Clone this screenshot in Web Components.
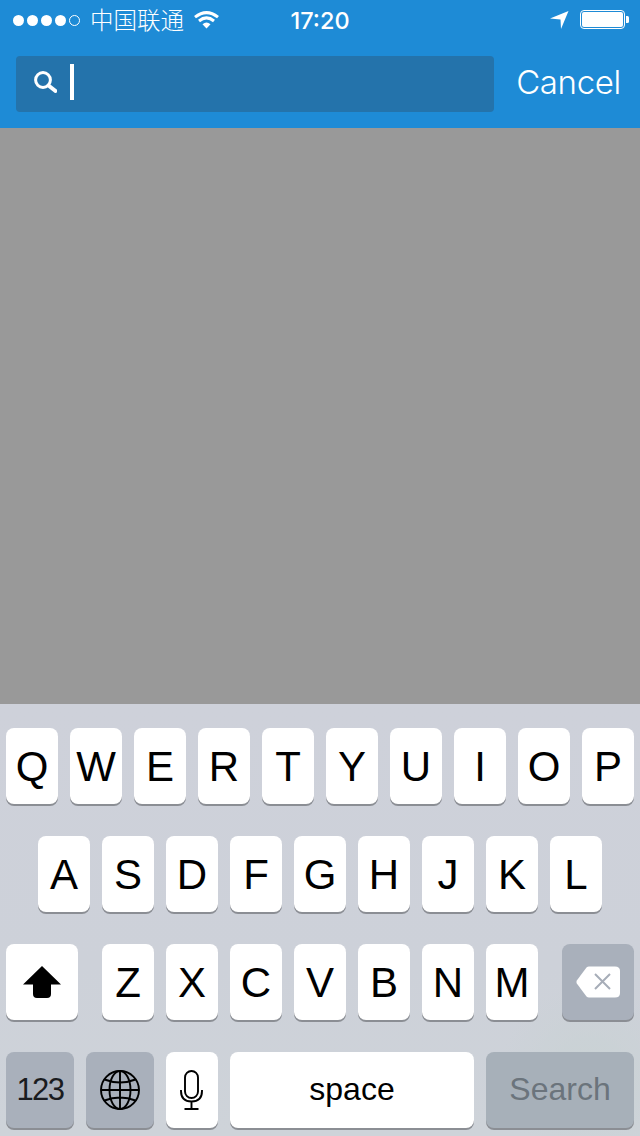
<!DOCTYPE html>
<html><head><meta charset="utf-8"><style>
html,body{margin:0;padding:0;height:100%}
body{width:640px;height:1136px;overflow:hidden;display:flex;flex-direction:column;font-family:"Liberation Sans",Arial,sans-serif;background:#999}
</style></head><body>
<search-header></search-header>
<dim-area></dim-area>
<ios-keyboard>
  <kb-row><kb-key>Q</kb-key><kb-key>W</kb-key><kb-key>E</kb-key><kb-key>R</kb-key><kb-key>T</kb-key><kb-key>Y</kb-key><kb-key>U</kb-key><kb-key>I</kb-key><kb-key>O</kb-key><kb-key>P</kb-key></kb-row>
  <kb-row><kb-key>A</kb-key><kb-key>S</kb-key><kb-key>D</kb-key><kb-key>F</kb-key><kb-key>G</kb-key><kb-key>H</kb-key><kb-key>J</kb-key><kb-key>K</kb-key><kb-key>L</kb-key></kb-row>
  <kb-row>
    <kb-key w="72" flat style="margin-right:12px"><svg width="38" height="34" viewBox="0 0 38 34"><path d="M19 1 L38 19.5 H28 V29 Q28 33 24 33 H14 Q10 33 10 29 V19.5 H0 Z" fill="#000"/></svg></kb-key>
    <kb-key>Z</kb-key><kb-key>X</kb-key><kb-key>C</kb-key><kb-key>V</kb-key><kb-key>B</kb-key><kb-key>N</kb-key><kb-key>M</kb-key>
    <kb-key w="72" flat tone="dark" style="margin-left:12px"><svg width="44" height="32" viewBox="0 0 44 32"><path d="M13 .5 H39 Q44 .5 44 5 V27 Q44 31.5 39 31.5 H13 Q11.5 31.5 10.5 30.5 L.8 17.5 Q0 16 .8 14.5 L10.5 1.5 Q11.5 .5 13 .5Z" fill="#fff"/><path d="M19 8 L34 23 M34 8 L19 23" stroke="#a7adb8" stroke-width="2" fill="none"/></svg></kb-key>
  </kb-row>
  <kb-row>
    <kb-key w="68" flat tone="dark" size="31" track="-1.5" style="color:#1a1c20">123</kb-key>
    <kb-key w="68" flat tone="dark"><svg width="40" height="40" viewBox="0 0 40 40" fill="none" stroke="#000" stroke-width="1.9"><circle cx="20" cy="20" r="19"/><ellipse cx="20" cy="20" rx="10.5" ry="19"/><path d="M20 1V39M1 20H39M4.5 9.5Q20 15.5 35.5 9.5M4.5 30.5Q20 24.5 35.5 30.5"/></svg></kb-key>
    <kb-key flat><svg width="23" height="40" viewBox="0 0 23 40" fill="none" stroke="#000" stroke-width="1.9" style="margin-right:1px"><rect x="5" y="1" width="13" height="27" rx="6.5"/><path d="M1 20V21Q1 31.5 11.5 31.5Q22 31.5 22 21V20M11.5 31.5V39M4.5 39H18.5"/></svg></kb-key>
    <kb-key w="244" flat size="32" lift="2">space</kb-key>
    <kb-key w="148" flat tone="search" size="32" lift="2">Search</kb-key>
  </kb-row>
</ios-keyboard>
<script>
function def(name,css,html,extra){
  customElements.define(name,class extends HTMLElement{
    constructor(){super();this.attachShadow({mode:'open'}).innerHTML='<style>'+css+'</style>'+html}
    connectedCallback(){if(extra)extra(this)}
  })
}
def('status-bar',`
:host{display:flex;align-items:center;height:40px;color:#fff;position:relative}
.dots{display:flex;gap:3px;margin-left:13px}
.dots i{width:11px;height:11px;border-radius:50%;background:#fff;box-sizing:border-box}
.dots i:last-child{background:none;border:1px solid #fff}
.carrier{margin-left:10px;font:300 23.5px/38px "Noto Sans CJK SC",sans-serif;white-space:nowrap;width:94px;height:40px}
.wifi{margin-left:10px}
.time{position:absolute;left:0;right:0;text-align:center;font:500 23.5px/41px Inter,"Liberation Sans",sans-serif;pointer-events:none}
.right{margin-left:auto;display:flex;align-items:center;margin-right:10px;gap:11px}
`,`
<div class="dots"><i></i><i></i><i></i><i></i><i></i></div>
<span class="carrier">中国联通</span>
<svg class="wifi" width="25" height="18" viewBox="0 0 25 18" fill="none" stroke="#fff" stroke-width="3"><path d="M1 6.2Q12.5 -3 24 6.2M5 10Q12.5 3.8 20 10"/><path d="M8.5 13.2 L12.5 17.6 L16.5 13.2 Q12.5 10 8.5 13.2Z" fill="#fff" stroke="none"/></svg>
<span class="time">17:20</span>
<div class="right">
<svg width="19" height="18" viewBox="0 0 19 18"><path d="M0 7.5 L18.5 0 L11 18 L10.5 8.5 Z" fill="#fff"/></svg>
<svg width="50" height="20" viewBox="0 0 50 20"><rect x=".5" y=".5" width="44" height="18" rx="3.5" fill="none" stroke="#fff"/><rect x="2" y="2" width="41" height="15" rx="2" fill="#fff"/><path d="M46 6h1.5q1.5 0 1.5 1.5v4q0 1.5-1.5 1.5H46z" fill="#fff"/></svg>
</div>`);
def('search-field',`
:host{display:flex;align-items:center;flex:1;height:56px;background:#2473ab;border-radius:4px;box-sizing:border-box;padding:0 0 4px 17px}
.cur{width:4px;height:36px;background:#fff;margin-left:13px}
`,`<svg width="24" height="24" viewBox="0 0 24 24" fill="none" stroke="#fff"><circle cx="10" cy="10" r="7.4" stroke-width="3"/><path d="M15.5 15.5L22.5 21" stroke-width="4" stroke-linecap="round"/></svg><div class="cur"></div>`);
def('search-header',`
:host{display:block;background:#1e8bd6;height:128px;flex:none}
.row{display:flex;align-items:center;height:56px;margin-top:16px;padding-left:16px}
.cancel{width:146px;box-sizing:border-box;padding:0 0 4px 3px;text-align:center;font:300 33px/52px Inter,"Liberation Sans",sans-serif;letter-spacing:-.35px;color:#fff}
`,`<status-bar></status-bar><div class="row"><search-field></search-field><span class="cancel">Cancel</span></div>`);
def('dim-area',`:host{display:block;flex:1;background:#999}`,``);
def('ios-keyboard',`
:host{display:flex;flex-direction:column;gap:32px;height:432px;box-sizing:border-box;padding:24px 6px 0;flex:none;
background:radial-gradient(circle at 590px 370px,#c9d2d4 0,rgba(205,210,216,0) 90px),linear-gradient(#ced1da,#cdd1d9 60%,#ced3d9)}
`,`<slot></slot>`);
def('kb-row',`:host{display:flex;justify-content:center;gap:12px;height:76px}`,`<slot></slot>`);
def('kb-key',`
:host{display:flex;align-items:center;justify-content:center;width:var(--w,52px);height:76px;box-sizing:border-box;padding-top:2px;padding-bottom:var(--l,0);flex:none;background:#fff;border-radius:8px;box-shadow:0 2px 0 #8b8e94;color:#000;font-size:var(--s,42px);letter-spacing:var(--t,0);font-family:"Liberation Sans",sans-serif}
:host([flat]){padding-top:0}
:host([tone=dark]){background:#a9b0bb}
:host([tone=search]){background:#a7b0b9;color:#6b747c}
`,`<slot></slot>`,el=>{
  if(el.hasAttribute('w'))el.style.setProperty('--w',el.getAttribute('w')+'px');
  if(el.hasAttribute('size'))el.style.setProperty('--s',el.getAttribute('size')+'px');
  if(el.hasAttribute('track'))el.style.setProperty('--t',el.getAttribute('track')+'px');
  if(el.hasAttribute('lift'))el.style.setProperty('--l',el.getAttribute('lift')+'px');
});
</script>
</body></html>
